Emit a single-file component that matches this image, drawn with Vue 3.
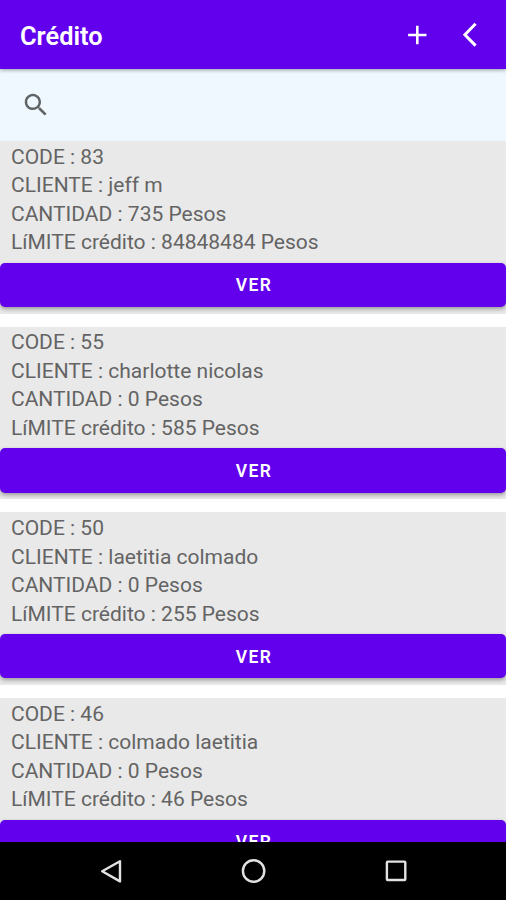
<template>
  <div class="screen">
    <header class="app-bar">
      <h1>Crédito</h1>
      <button class="bar-action" aria-label="Agregar">
        <svg width="30" height="30" viewBox="0 0 30 30">
          <path d="M15.3 5.8v18.4M6.1 15h18.4" />
        </svg>
      </button>
      <button class="bar-action back" aria-label="Volver">
        <svg width="30" height="30" viewBox="0 0 30 30">
          <path d="M20.6 3.8L9.9 14.7l10.7 10.9" />
        </svg>
      </button>
    </header>

    <div class="search">
      <svg width="30" height="30" viewBox="0 0 24 24">
        <path
          d="M15.5 14h-.79l-.28-.27C15.41 12.59 16 11.11 16 9.5 16 5.91 13.09 3 9.5 3S3 5.91 3 9.5 5.91 16 9.5 16c1.61 0 3.09-.59 4.23-1.57l.27.28v.79l5 4.99L20.49 19l-4.99-5zm-6 0C7.01 14 5 11.99 5 9.5S7.01 5 9.5 5 14 7.01 14 9.5 11.99 14 9.5 14z"
        />
      </svg>
    </div>

    <main class="list">
      <section v-for="c in creditos" :key="c.code" class="card">
        <p>CODE : {{ c.code }}</p>
        <p>CLIENTE : {{ c.cliente }}</p>
        <p>CANTIDAD : {{ c.cantidad }} Pesos</p>
        <p>LíMITE crédito : {{ c.limite }} Pesos</p>
        <button class="ver">VER</button>
      </section>
    </main>

    <nav class="nav-bar">
      <svg width="30" height="30" viewBox="0 0 30 30">
        <path d="M24 5.2v20.2L6.2 15.3z" />
      </svg>
      <svg width="30" height="30" viewBox="0 0 30 30">
        <circle cx="14.6" cy="15" r="10.7" />
      </svg>
      <svg width="30" height="30" viewBox="0 0 30 30">
        <rect x="5.9" y="5.6" width="18.4" height="18.4" rx="0.8" />
      </svg>
    </nav>
  </div>
</template>

<script setup>
import { ref } from 'vue'

const creditos = ref([
  { code: 83, cliente: 'jeff m', cantidad: 735, limite: 84848484 },
  { code: 55, cliente: 'charlotte nicolas', cantidad: 0, limite: 585 },
  { code: 50, cliente: 'laetitia colmado', cantidad: 0, limite: 255 },
  { code: 46, cliente: 'colmado laetitia', cantidad: 0, limite: 46 }
])
</script>

<style>
body {
  margin: 0;
  overflow: hidden;
}
</style>

<style scoped>
.screen {
  display: flex;
  flex-direction: column;
  height: 900px;
  overflow: hidden;
  background: #fff;
  font-family: Roboto, "Liberation Sans", sans-serif;
}
button {
  padding: 0;
  border: 0;
  font-family: inherit;
}
.app-bar {
  display: flex;
  flex: none;
  align-items: center;
  box-sizing: border-box;
  height: 69px;
  padding: 0 21px 0 20px;
  background: #6200ee;
  box-shadow: 0 1px 4px rgba(0, 0, 0, 0.4);
  color: #fff;
  z-index: 1;
}
.app-bar h1 {
  flex: 1;
  margin: 2px 0 0;
  font-size: 25.4px;
  font-weight: 600;
}
.bar-action {
  width: 30px;
  height: 30px;
  background: none;
}
.back {
  margin-left: 23px;
}
.bar-action svg {
  display: block;
  fill: none;
  stroke: #fff;
  stroke-width: 2.6;
}
.back svg {
  stroke-width: 3;
}
.search {
  display: flex;
  flex: none;
  align-items: center;
  box-sizing: border-box;
  height: 72px;
  padding-left: 21px;
  background: #f0f8ff;
}
.search svg {
  fill: #606464;
}
.list {
  flex: 1;
  min-height: 0;
  overflow: hidden;
}
.card {
  box-sizing: border-box;
  height: 172.5px;
  margin-bottom: 13.2px;
  padding-top: 1.6px;
  background: #e9e9e9;
}
.card p {
  margin: 0;
  padding-left: 11px;
  color: #646464;
  font-size: 21px;
  line-height: 28.6px;
  white-space: nowrap;
}
.ver {
  display: block;
  width: 100%;
  height: 44.5px;
  margin-top: 5.6px;
  padding: 1px 0 0 2px;
  border-radius: 5px;
  background: #6200ee;
  box-shadow: 0 2px 4px rgba(0, 0, 0, 0.35);
  color: #fff;
  font-size: 17.5px;
  font-weight: 600;
  letter-spacing: 1.4px;
}
.nav-bar {
  display: flex;
  flex: none;
  justify-content: space-between;
  align-items: center;
  box-sizing: border-box;
  height: 58px;
  padding: 0 95px 0 96px;
  background: #000;
}
.nav-bar svg {
  fill: none;
  stroke: #e2e2e2;
  stroke-width: 2.4;
  stroke-linejoin: round;
}
</style>
